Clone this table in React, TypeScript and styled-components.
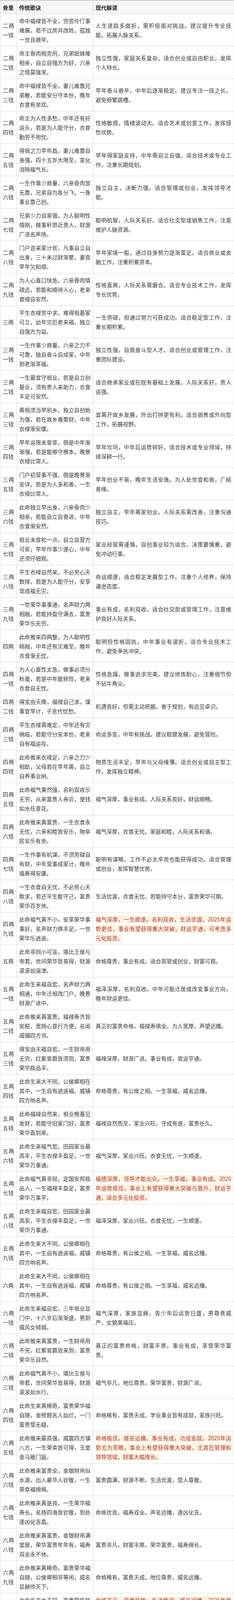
import React from 'react'
import styled, { createGlobalStyle } from 'styled-components'

type Row = [string, string, string, boolean?]

const rows: Row[] = [
	['二两一钱', '命中福禄皆不全，穷苦伶仃事难展，若不过房并改姓，孤独一世且艰辛。', '人生道路多曲折，需积极面对挑战。建议提升专业技能，拓展人脉关系。'],
	['二两二钱', '命主骨肉相克刑，兄弟姐妹难相亲，自立自强方为好，六亲之情莫强求。', '独立性强，家庭关系复杂。适合创业或自由职业，发挥个人特长。'],
	['二两三钱', '命中福禄皆不全，妻儿难靠兄弟散，若能安分守本份，晚年衣食有余欢。', '早年奋斗艰辛，中年后逐渐稳定。建议专注一技之长，避免频繁跳槽。'],
	['二两四钱', '命主为人性多愁，中年还有好运头，若是为人能守分，衣食勤劳不用忧。', '性格敏感，情绪波动大。适合艺术或创意工作，发挥感性优势。'],
	['二两五钱', '得祖之力早年昌，妻儿难靠自身强，四十五岁大限至，变化消除福气长。', '早年得家庭支持，中年需自立自强。适合技术或专业工作，注重长期规划。'],
	['二两六钱', '一生作事少商量，六亲骨肉皆无靠，兄弟自为各分飞，一身事业靠己创。', '独立自主，决断力强。适合管理或创业，发挥领导才能。'],
	['二两七钱', '兄弟少力自家强，为人聪明性情刚，做事轩昂近贵人，财源广进名声扬。', '聪明机智，人际关系好。适合社交型或销售工作，注意维护人脉资源。'],
	['二两八钱', '门户迩来家计贫，凡事自立自出身，三十未过财渐聚，妻宫早年欠和顺。', '早年家境一般，通过自身努力逐渐富足。适合商业或金融工作，注重积累资本。'],
	['二两九钱', '为人心直口快急，六亲骨肉情疏远，若能和顺待人心，老来食禄自安然。', '性格直爽，人际关系需磨合。适合专业技术工作，发挥专长优势。'],
	['三两', '平生衣禄苦中求，难得祖基家可立，幼年灾厄老来福，独立自强方为益。', '一生劳碌，但通过努力可获成功。适合稳定型工作，注重长期积累。'],
	['三两一钱', '一生作事少商量，六亲之力不可靠，独自奋斗自成家，中年到老渐享福。', '独立性强，自我奋斗型人才。适合创业或管理工作，注重团队建设。'],
	['三两二钱', '一生最宜守祖业，若是自立创基业，须有贵人来助力，衣食丰足可安然。', '适合继承家业或在既有基础上发展。人际关系好，贵人运强。'],
	['三两三钱', '离祖须当早别乡，独立自创始为强，若在故乡难聚财，中年衣禄渐安康。', '宜离开故乡发展，外出打拼更有利。适合销售或外向型工作，拓展视野。'],
	['三两四钱', '早年运限未曾享，倒是中年渐渐强，若是能够守根本，晚景衣禄比常人。', '早年坎坷，中年后运势转好。适合技术或专业领域，持续深耕一行。'],
	['三两五钱', '门户初营事不强，倒是晚景渐安详，若是为人多和善，一生衣禄比常人。', '早年创业不易，晚年生活安逸。为人处世宜和善，广结善缘。'],
	['三两六钱', '此命独立早出身，六亲骨肉少相亲，若能自立自奋进，中年衣食渐安然。', '独立自主，早年离家创业。人际关系需改善，注重沟通技巧。'],
	['三两七钱', '祖业未曾松一点，自立自营方可安，早年作事少遂心，中年还须仔细观。', '家业经营需谨慎，自创事业较为适合。决策要慎重，避免冲动行事。'],
	['三两八钱', '平生衣禄自然来，不必劳心天数排，若是为人能守分，安享现成福无灾。', '命运顺遂，适合稳定发展型工作。注重个人修养，保持谦逊态度。'],
	['三两九钱', '一世荣华事事通，名声财力两相融，若能持盈守满去，富贵荣华乐无穷。', '事业有成，名利双收。适合社交型或管理工作，注意维护良好人际关系。'],
	['四两', '此命推来四两整，为人聪明性稍拗，中年还有灾难至，晚年衣食渐无忧。', '聪明但性格固执，中年事业有波折。适合专业技术工作，避免争执冲突。'],
	['四两一钱', '为人心直性太急，做事必须分秋毫，若是中年能转性，老来衣食自无忧。', '性格急躁，做事追求完美。建议修炼耐心，注重细节但不钻牛角尖。'],
	['四两二钱', '得宝由天降，福禄自己求，谋事宜早计，子息代忧愁。', '机遇良好，但需主动把握。善于规划，有远见卓识。'],
	['四两三钱', '平生衣禄真难定，中年还有灾祸临，若能守分安本份，老来自有福运存。', '命运多变，中年有挑战。建议稳健发展，避免冒险。'],
	['四两四钱', '此命推来衣禄足，六亲之力少相助，父母若在早年离，自立自养事业树。', '物质生活丰足，早年与父母缘薄。适合创业或自主型工作，发挥独立精神。'],
	['四两五钱', '此命福气果然强，名利双收乐无穷，从来富贵人亲近，使钱如水任意花。', '福气深厚，事业有成。人际关系良好，财运顺畅。'],
	['四两六钱', '此命推来真富贵，一生衣食永无忧，六亲和睦皆安乐，物阜民安乐有余。', '福气深厚，衣食无忧。家庭和睦，人际关系和谐。'],
	['四两七钱', '一生作事有机谋，不须劳碌自有财，中年营事成家计，晚年福寿得安康。', '聪明有谋略，工作不必太辛苦也能获得成功。适合管理或创业，发挥智慧优势。'],
	['四两八钱', '一生衣食自无忧，不必劳心天数求，若还平生能守己，富贵荣华百岁休。', '生活优渥，衣食无忧。若能持守本分，富贵荣华可期。'],
	['四两九钱', '此命福气真不小，安享荣华事事好，名声财力俱丰足，一世荣华乐逍遥。', '福气深厚，一生顺遂。名利双收，生活优渥。2025年运势更佳，事业有望获得重大突破，财运亨通，可考虑多元化投资。', true],
	['五两', '此命非同小可言，堪比王侯与帝君，世间荣华皆易得，财源滚滚如湍津。', '命格尊贵，事业有成。适合高管或创业，财富可观。'],
	['五两一钱', '此命生来福自宏，名声财力两相通，中年迁祖改门户，晚景财源广进中。', '福泽深厚，名利双收。中年可能迁居或改变事业方向，晚年财运更佳。'],
	['五两二钱', '此命推来真富贵，福禄寿齐皆安稳，宽扬心意行方便，名闻威镇四方邻。', '真正的富贵命格，福禄寿俱全。为人宽厚，声望远播。'],
	['五两三钱', '得宝由天福自宏，一生财帛用无穷，红紫官爵皆须到，富贵荣华极品丰。', '福禄深厚，财源广进。事业有成，官运亨通。'],
	['五两四钱', '此命生来大不同，公侯卿相在其中，一生自有逍遥福，威镇四方响名声。', '命格尊贵，有公侯之相。一生享福，威名远播。'],
	['五两五钱', '此命福禄自然来，祖业根基见发财，若能守旧家门好，富贵荣华直到来。', '福禄自然而至，家业兴旺。守成有道，富贵长久。'],
	['五两六钱', '此命生来福气宏，田园家业最高丰，平生衣禄丰盈足，一世荣华万事通。', '福气深厚，家业兴旺。衣食无忧，一生顺遂。'],
	['五两七钱', '此命福气真非轻，定国安邦极品人，一生福禄丰盈足，富贵荣华万事亨。', '福德深厚，领导才能出众。一生享福，事业有成。2025年运势极佳，事业上有望获得重大突破与晋升，财运亨通，适合多元化投资。', true],
	['五两八钱', '此命生来福自宏，田园家业最高崇，平生衣禄丰盈足，一世荣华万事通。', '福泽深厚，家业兴旺。衣食无忧，一生顺遂。'],
	['五两九钱', '此命生来大不同，公侯卿相在其中，一生自有逍遥福，威镇四方响名声。', '命格尊贵，有公侯之相。一生享福，威名远播。'],
	['六两', '此命生来大不同，公侯卿相在其中，一生自有逍遥福，威镇四方响名声。', '命格尊贵，有公侯之相。一生享福，威名远播。'],
	['六两一钱', '此命生来福自宏，三年祖业显门中，十六岁后渐渐盛，男到威风女倾城。', '福气深厚，家族显赫。青少年后运势日盛，男尊贵威严，女貌美端庄。'],
	['六两二钱', '此命推来真富贵，一生财帛用不完，红紫官爵皆来到，富贵荣华乐自然。', '真正的富贵命格，财富丰厚。事业有成，享受荣华富贵。'],
	['六两三钱', '此命福气真不小，堪比王侯与帝君，世间荣华皆易得，财源滚滚如水行。', '福气非凡，地位尊贵。荣华富贵，财源广进。'],
	['六两四钱', '此命生来真稀奇，富贵荣华福自随，金榜题名人灿烂，一门富贵受无疑。', '命格稀有，富贵天成。学业事业皆有成就，家族兴旺。'],
	['六两五钱', '此命推来最高强，威震四方镇八方，一生荣幸皆可得，玉堂金马敞门庭。', '命格极佳，威名远播。事业有成，功成名就。2025年运势尤为亮眼，事业上有望获得重大突破，尤其在管理和领导领域，财富大幅增长。', true],
	['六两六钱', '此命推来富贵全，金银财帛似水源，出入豪华人钦敬，一生荣幸福绵绵。', '富贵圆满，财源不断。生活优渥，受人尊敬。'],
	['六两七钱', '此命推来真是良，一生荣华福寿长，名扬四海皆钦敬，到处逢凶化吉昌。', '命格优良，福寿双全。声名远播，逢凶化吉。'],
	['六两八钱', '此命推来真富贵，金银财帛满堂居，荣华富贵年年有，福寿双全永不休。', '富贵非凡，财富丰厚。荣华富贵，福寿绵长。'],
	['六两九钱', '此命推来真稀奇，富贵荣华福自随，公侯卿相非等闲，威名显赫传天下。', '命格稀有，富贵天成。地位尊贵，威名远播。'],
	['七两一钱', '此命生来大不同，富贵荣华极品崇，一生自有逍遥福，四方名誉播威风。', '命格非凡，富贵极致。生活悠闲，威名远播。2025年是命格巅峰之年，事业上有望创造历史性突破，财富积累迅速，人脉资源大幅增加。', true],
	['七两二钱', '此命生来福自宏，富贵荣华极品崇，君臣豪杰多钦敬，威名显赫震乾坤。', '福禄深厚，富贵极致。受人敬仰，威名显赫。2025年将是人生巅峰之年，事业上有望获得历史性成就，财富积累创新高，社会影响力达到极致。', true],
]

const GlobalStyle = createGlobalStyle`
	body {
		margin: 0;
		background: #fff;
		font-family: "Noto Sans CJK SC", "Noto Sans", sans-serif;
	}
`

export default function App() {
	return (
		<>
			<GlobalStyle />
			<Table>
				<Line $head>
					<HeadCell>骨重</HeadCell>
					<HeadCell>传统歌诀</HeadCell>
					<HeadCell>现代解读</HeadCell>
				</Line>
				{rows.map(([weight, verse, modern, hot]) => (
					<Line key={weight}>
						<Cell>{weight}</Cell>
						<Cell>{verse}</Cell>
						<Cell>
							<div>{hot ? <Hot>{modern}</Hot> : modern}</div>
						</Cell>
					</Line>
				))}
			</Table>
		</>
	)
}

const Table = styled.div`
	width: 600px;
	box-sizing: border-box;
	border-top: 2px solid #cbcbcb;
	border-left: 1px solid #dcdcdc;
	margin-bottom: 2px;
`

const Line = styled.div<{ $head?: boolean }>`
	display: grid;
	grid-template-columns: 42px 196px 1fr;
	background: ${p => (p.$head ? '#f6f6f6' : '#fff')};
`

const Cell = styled.div`
	box-sizing: border-box;
	display: flex;
	flex-direction: column;
	justify-content: center;
	padding: 5px 6px;
	border-right: 1px solid #dcdcdc;
	border-bottom: 1px solid #dcdcdc;
	font-size: 14px;
	line-height: 24px;
	color: #3b3b3b;
	text-align: justify;
	min-width: 0;
`

const HeadCell = styled(Cell)`
	padding: 5px 6px 4px;
	font-weight: 700;
	color: #2a2a2a;
	text-align: left;
`

const Hot = styled.span`
	color: #b5382d;
	background: #fef5e3;
`
